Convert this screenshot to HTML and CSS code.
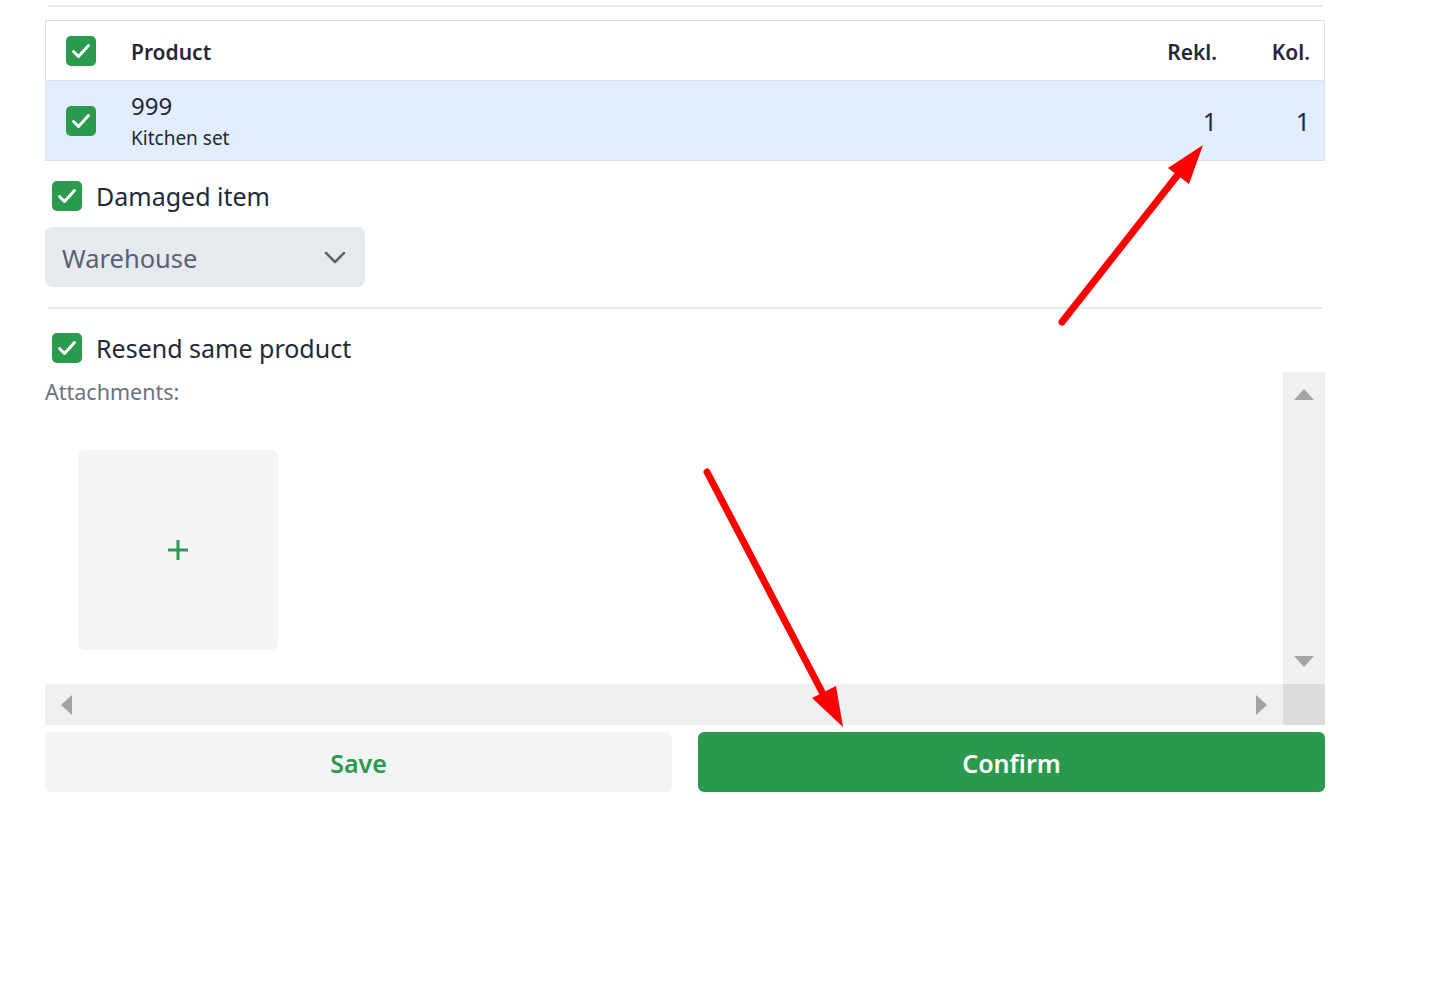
FILE: index.html
```html
<!DOCTYPE html>
<html lang="en">
<head>
<meta charset="utf-8">
<title>Claim</title>
<link rel="stylesheet" href="styles.css">
</head>
<body>
<div class="page">
  <div class="divider"></div>

  <div class="table">
    <div class="row head">
      <span class="cb"><svg viewBox="0 0 30 30"><path d="M7.5 15.5 L12.5 20.5 L22.5 9.5"/></svg></span>
      <div class="cell-product">Product</div>
      <div class="cell-rekl">Rekl.</div>
      <div class="cell-kol">Kol.</div>
    </div>
    <div class="row item">
      <span class="cb"><svg viewBox="0 0 30 30"><path d="M7.5 15.5 L12.5 20.5 L22.5 9.5"/></svg></span>
      <div class="cell-product">
        <div class="code">999</div>
        <div class="name">Kitchen set</div>
      </div>
      <div class="cell-rekl num">1</div>
      <div class="cell-kol num">1</div>
    </div>
  </div>

  <label class="check-line first">
    <span class="cb"><svg viewBox="0 0 30 30"><path d="M7.5 15.5 L12.5 20.5 L22.5 9.5"/></svg></span>
    <span>Damaged item</span>
  </label>

  <div class="select">
    <span>Warehouse</span>
    <svg class="chev" viewBox="0 0 22 14"><path d="M2 2 L11 11 L20 2"/></svg>
  </div>

  <div class="divider mid"></div>

  <label class="check-line second">
    <span class="cb"><svg viewBox="0 0 30 30"><path d="M7.5 15.5 L12.5 20.5 L22.5 9.5"/></svg></span>
    <span>Resend same product</span>
  </label>

  <div class="scroller">
    <div class="scroll-content">
      <div class="att-label">Attachments:</div>
      <div class="tile">
        <svg class="plus" viewBox="0 0 22 22"><path d="M11 1 V21 M1 11 H21"/></svg>
      </div>
    </div>
    <div class="vbar">
      <svg class="arr" viewBox="0 0 20 11"><path d="M0 11 L10 0 L20 11 Z"/></svg>
      <svg class="arr" viewBox="0 0 20 11"><path d="M0 0 L10 11 L20 0 Z"/></svg>
    </div>
    <div class="hbar">
      <svg class="arr-h" viewBox="0 0 11 20"><path d="M11 0 L0 10 L11 20 Z"/></svg>
      <svg class="arr-h" viewBox="0 0 11 20"><path d="M0 0 L11 10 L0 20 Z"/></svg>
    </div>
    <div class="corner"></div>
  </div>

  <div class="actions">
    <button class="btn save">Save</button>
    <button class="btn confirm">Confirm</button>
  </div>
</div>

<svg class="annot" viewBox="0 0 1453 985">
  <line x1="1062" y1="322" x2="1180" y2="172" />
  <polygon points="1203,145 1168,168 1189,184" />
  <line x1="707" y1="472" x2="822" y2="692" />
  <polygon points="843,727 812,698 836,686" />
</svg>
</body>
</html>
```

FILE: styles.css
```css
* { box-sizing: border-box; }

body {
  margin: 0;
  background: #ffffff;
  font-family: "Noto Sans", "Open Sans", sans-serif;
  color: #1f2937;
}

.page {
  width: 1280px;
  margin-left: 45px;
  padding-top: 5px;
}

.divider {
  height: 2px;
  background: #e5e8ee;
  margin: 0 3px;
}

.divider.mid { margin-top: 20px; }

.table {
  margin-top: 13px;
  border: 1px solid #dbe1e8;
}

.row {
  display: flex;
  align-items: center;
  padding: 0 14px 0 20px;
}

.row.head {
  height: 60px;
  font-size: 21px;
  font-weight: 600;
  color: #1f2937;
  border-bottom: 1px solid #dbe1e8;
}

.row.head .cell-product,
.row.head .cell-rekl,
.row.head .cell-kol {
  margin-top: 2px;
}

.row.item {
  height: 79px;
  background: #e2eefd;
}

.cb {
  width: 30px;
  height: 30px;
  flex: none;
  background: #2a9a4c;
  border-radius: 5px;
  display: flex;
  align-items: center;
  justify-content: center;
}

.cb svg {
  width: 30px;
  height: 30px;
  fill: none;
  stroke: #ffffff;
  stroke-width: 3;
  stroke-linecap: round;
  stroke-linejoin: round;
}

.cell-product {
  flex: 1;
  margin-left: 35px;
}

.cell-rekl {
  width: 110px;
  text-align: right;
}

.cell-kol {
  width: 93px;
  text-align: right;
}

.code {
  font-size: 24px;
  line-height: 30px;
  margin-top: 1px;
}

.name {
  font-size: 19px;
  line-height: 26px;
  margin-top: 4px;
}

.num {
  font-size: 25px;
}

.check-line {
  display: flex;
  align-items: center;
  margin-left: 7px;
  font-size: 25px;
  color: #1f2937;
  height: 30px;
}

.check-line .cb { margin-right: 14px; }

.check-line.first { margin-top: 20px; }
.check-line.second { margin-top: 24px; }

.select {
  margin-top: 16px;
  width: 320px;
  height: 60px;
  background: #e6e9ee;
  border-radius: 7px;
  display: flex;
  align-items: center;
  justify-content: space-between;
  padding: 2px 19px 0 17px;
  font-size: 25.5px;
  color: #596271;
}

.chev {
  width: 22px;
  height: 14px;
  fill: none;
  stroke: #596271;
  stroke-width: 2.5;
  stroke-linecap: round;
  stroke-linejoin: round;
}

.scroller {
  margin-top: 9px;
  display: grid;
  grid-template-columns: 1238px 42px;
  grid-template-rows: 312px 41px;
}

.scroll-content {
  padding-top: 5px;
}

.att-label {
  font-size: 21.5px;
  line-height: 30px;
  color: #6b7280;
}

.tile {
  margin-top: 43px;
  margin-left: 33px;
  width: 200px;
  height: 200px;
  background: #f3f4f6;
  border-radius: 7px;
  display: flex;
  align-items: center;
  justify-content: center;
}

.plus {
  width: 22px;
  height: 22px;
  fill: none;
  stroke: #2a9a4c;
  stroke-width: 3;
}

.vbar {
  background: #f0f0f0;
  display: flex;
  flex-direction: column;
  justify-content: space-between;
  align-items: center;
  padding: 17px 0 17px;
}

.arr { width: 20px; height: 11px; fill: #a3a3a3; }

.hbar {
  background: #f0f0f0;
  display: flex;
  justify-content: space-between;
  align-items: center;
  padding: 0 16px 0 16px;
}

.arr-h { width: 11px; height: 20px; fill: #a3a3a3; }

.corner { background: #dcdcdc; }

.actions {
  margin-top: 7px;
  display: grid;
  grid-template-columns: 1fr 1fr;
  gap: 26px;
}

.btn {
  height: 60px;
  border: none;
  border-radius: 6px;
  padding-top: 2px;
  font-family: "Noto Sans", "Open Sans", sans-serif;
  font-size: 25px;
  font-weight: 600;
}

.btn.save {
  background: #f3f4f6;
  color: #2a9a4c;
}

.btn.confirm {
  background: #2a994c;
  color: #ffffff;
}

.annot {
  position: absolute;
  left: 0;
  top: 0;
  width: 1453px;
  height: 985px;
  pointer-events: none;
}

.annot line {
  stroke: #ff0000;
  stroke-width: 7;
  stroke-linecap: round;
}

.annot polygon { fill: #ff0000; }
```
